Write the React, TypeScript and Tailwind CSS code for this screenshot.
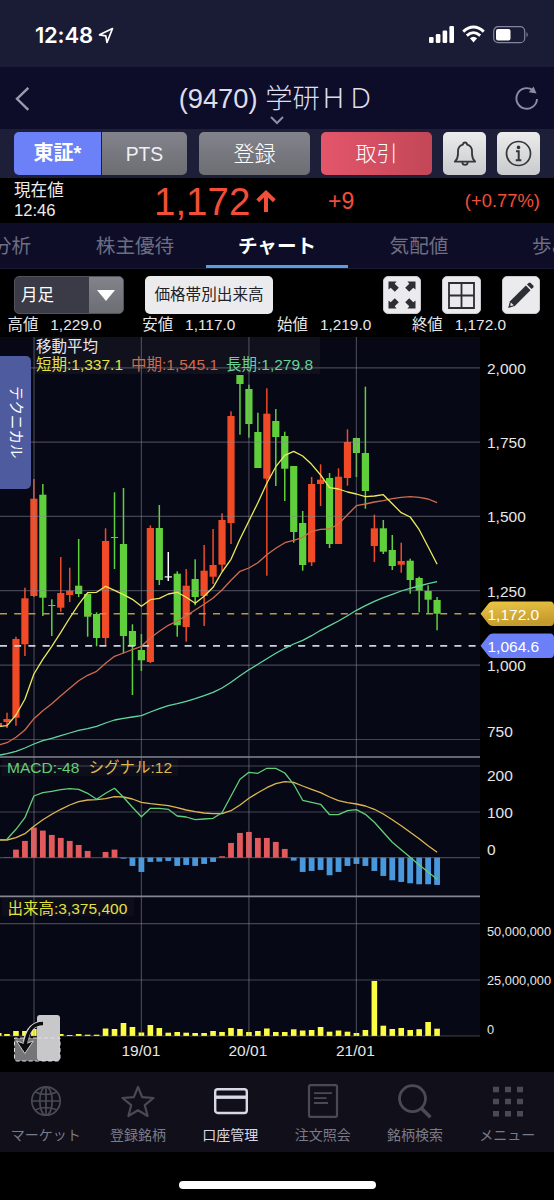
import { clsx } from "clsx";
import type { ReactNode } from "react";

type Candle = [kind: "up" | "down" | "flat", high: number, top: number, bottom: number, low: number];

const candleColor = { up: "#f04a26", down: "#5fd03c", flat: "#ffffff" };

const candles: Candle[] = [
  ["up", 712.7, 719, 722, 728],
  ["up", 636.7, 639, 717.7, 725.7],
  ["up", 587.7, 598.3, 644.3, 656],
  ["up", 479, 498.7, 596, 597],
  ["down", 484, 494.7, 597.7, 616],
  ["down", 599.3, 605, 606, 636],
  ["up", 557, 593, 607.7, 611.7],
  ["up", 567.7, 590.7, 595, 602],
  ["down", 539, 585.7, 594, 597],
  ["down", 593.3, 594, 616.7, 636.7],
  ["down", 612.3, 614, 638, 646.3],
  ["up", 528.3, 541, 638, 646],
  ["down", 492.3, 537, 538, 569],
  ["down", 488, 544, 636, 653.3],
  ["down", 624.3, 631, 646, 695],
  ["down", 634, 650, 660.3, 671],
  ["up", 525.3, 528, 662, 663],
  ["down", 505, 528, 580, 585],
  ["flat", 552, 576.3, 577.5, 581],
  ["down", 571.3, 573.7, 625.3, 636.7],
  ["up", 569, 585.7, 627, 641.7],
  ["down", 559.3, 579, 597, 605.3],
  ["up", 545, 570.7, 596, 626],
  ["up", 529, 565, 576.7, 584],
  ["up", 513.3, 520, 564.7, 571],
  ["up", 411.3, 416, 523, 544],
  ["down", 375, 375, 384, 434.7],
  ["down", 384.7, 389, 424, 437.7],
  ["down", 412.7, 432, 468, 468],
  ["up", 388.3, 413.7, 478.7, 575.7],
  ["down", 409, 421, 437, 486],
  ["down", 431.7, 436, 468.7, 501],
  ["down", 466, 466, 532, 542.7],
  ["down", 511, 523, 565, 570.7],
  ["up", 477, 484, 562.3, 566],
  ["up", 464.3, 479.7, 484, 506],
  ["down", 473, 478, 544, 548],
  ["up", 468.3, 476.7, 544, 544],
  ["up", 429.3, 442, 478, 485.7],
  ["down", 437.7, 438, 453, 477],
  ["down", 386.7, 453, 491, 508.7],
  ["up", 514.7, 528.3, 546, 562],
  ["down", 520, 528.3, 551.7, 554],
  ["down", 535, 550, 566, 570],
  ["up", 542.7, 561, 564.7, 572.7],
  ["down", 558.7, 560.7, 580, 593.7],
  ["down", 576.7, 578, 590.7, 612.3],
  ["down", 585.3, 591, 599.7, 614],
  ["down", 597, 600, 613.7, 630.3]
];

// Series are stored in thirds of a pixel below the top of their pane, first value is the left edge
const shortMa = [1069, 1067, 1035, 988, 912, 868, 829, 787, 744, 703, 668, 667, 649, 661, 674, 688, 709, 689, 685, 672, 667, 682, 700, 679, 652, 606, 568, 507, 453, 398, 340, 290, 256, 244, 258, 283, 315, 353, 357, 366, 372, 380, 378, 374, 401, 428, 441, 479, 530, 583];
const middleMa = [1124, 1118, 1102, 1080, 1046, 1022, 1001, 977, 955, 932, 916, 904, 880, 859, 849, 839, 829, 804, 784, 766, 753, 737, 720, 703, 684, 660, 631, 604, 594, 578, 554, 535, 518, 511, 502, 484, 478, 477, 462, 434, 407, 402, 396, 392, 386, 382, 380, 382, 387, 398];
const longMa = [1155, 1151, 1144, 1134, 1122, 1112, 1105, 1097, 1089, 1081, 1076, 1069, 1059, 1050, 1045, 1041, 1037, 1026, 1016, 1007, 1001, 994, 986, 977, 967, 954, 937, 917, 899, 883, 866, 850, 835, 822, 811, 797, 781, 767, 753, 737, 721, 707, 694, 683, 673, 663, 655, 648, 641, 635];
const macd = [269, 268, 238, 203, 138, 128, 124, 119, 116, 118, 130, 148, 130, 115, 142, 172, 200, 175, 175, 178, 198, 201, 209, 207, 205, 188, 138, 88, 67, 70, 55, 55, 69, 103, 151, 157, 163, 194, 194, 182, 179, 193, 217, 247, 277, 299, 322, 345, 366, 388];
const signal = [270, 270, 263, 251, 229, 209, 193, 178, 165, 155, 150, 149, 146, 140, 141, 147, 157, 161, 164, 167, 173, 180, 185, 189, 191, 191, 182, 165, 145, 128, 113, 101, 95, 97, 108, 118, 128, 141, 152, 158, 162, 168, 178, 192, 209, 227, 247, 266, 287, 307];
const histogram = [1, 24, 50, 90, 81, 68, 59, 50, 38, 20, 0, 17, 24, -3, -25, -43, -13, -12, -10, -25, -22, -25, -19, -13, 4, 44, 74, 77, 59, 59, 47, 26, -9, -43, -40, -37, -53, -43, -25, -19, -25, -40, -55, -68, -73, -77, -80, -80, -82];
const volumes = [2, 5, 5, 7, 2, 2, 2, 1, 2, 1.3, 1.3, 7.5, 7, 13, 9, 3.5, 11, 8, 3.3, 4, 3.3, 3, 3, 5, 4, 8, 7, 4, 5, 7.5, 4, 4, 6.7, 5.5, 6, 9, 4.3, 5.5, 4.3, 3, 6, 55, 10.3, 7, 8, 6, 6.8, 14, 7.3];

const xAt = (i: number) => 7 + i * 8.96;

function linePoints(values: number[], paneTop: number) {
  return values.map((v, i) => `${i === 0 ? 0 : xAt(i - 1).toFixed(1)},${(paneTop + v / 3).toFixed(1)}`).join(" ");
}

const gridX = [34, 141.4, 248.9, 356.4];
const gridY = [367.8, 442.1, 516.4, 590.7, 665.2, 739.5, 766, 812, 857.6, 923.7, 980, 1036];

const axisLabels: [string, number][] = [
  ["2,000", 374],
  ["1,750", 448],
  ["1,500", 522.3],
  ["1,250", 597],
  ["1,000", 671],
  ["750", 737],
  ["200", 781],
  ["100", 818],
  ["0", 855]
];

const volumeLabels: [string, number][] = [
  ["50,000,000", 936],
  ["25,000,000", 985],
  ["0", 1034]
];

function PriceChart() {
  return (
    <svg width="554" height="735" viewBox="0 337 554 735" className="block" fill="none">
      <rect x="0" y="337" width="480" height="699" fill="#070815" />
      <rect x="34" y="337" width="286" height="37" fill="#10111d" />
      <rect x="2" y="759" width="176" height="17" fill="#0d0e1a" />
      <rect x="2" y="898" width="132" height="18" fill="#0d0e1a" />

      <rect x="0" y="723" width="2" height="3" fill="#f04a26" />
      {candles.map(([kind, high, top, bottom, low], i) => (
        <g key={i} fill={candleColor[kind]}>
          <rect x={xAt(i) - 0.75} y={high} width="1.5" height={low - high} />
          <rect x={xAt(i) - 3.6} y={top} width="7.2" height={bottom - top} />
        </g>
      ))}
      {histogram.map((v, i) => (
        <rect key={i} x={xAt(i) - 2.9} y={v > 0 ? 857.6 - v / 3 : 857.6} width="5.8" height={Math.abs(v) / 3} fill={v > 0 ? "#e25a5c" : "#4a98dc"} />
      ))}
      <rect x="0" y="1033" width="1.5" height="3" fill="#fdfc44" />
      {volumes.map((h, i) => (
        <rect key={i} x={xAt(i) - 2.8} y={1036 - h} width="5.6" height={h} fill="#fdfc44" />
      ))}

      <g stroke="#8c8c98" strokeOpacity="0.46" strokeWidth="1.2">
        {gridX.map((x) => (
          <line key={x} x1={x} x2={x} y1="337" y2="1036" />
        ))}
        {gridY.map((y) => (
          <line key={y} x1="0" x2="480" y1={y} y2={y} />
        ))}
      </g>
      <path d="M0 757H480M0 896.4H480" stroke="#85858f" strokeWidth="1.7" />

      <path d="M0 613.8H480" stroke="#b99a42" strokeWidth="1.5" strokeDasharray="7 7.2" />
      <path d="M0 645.9H480" stroke="#ced2de" strokeWidth="1.7" strokeDasharray="7 7.2" />

      <g strokeWidth="1.3" strokeLinejoin="round">
        <polyline points={linePoints(longMa, 370)} stroke="#62d69e" />
        <polyline points={linePoints(middleMa, 370)} stroke="#cd6c50" />
        <polyline points={linePoints(shortMa, 370)} stroke="#eaea5c" />
        <polyline points={linePoints(signal, 750)} stroke="#dfb750" />
        <polyline points={linePoints(macd, 750)} stroke="#62cf78" />
      </g>

      <g className="font-['Liberation_Sans','Noto_Sans_CJK_JP',sans-serif] text-[15.5px]" fill="#e6e6e8">
        <text x="36" y="351.5">移動平均</text>
        <text x="36" y="370" fill="#e4e23f">短期:1,337.1</text>
        <text x="131" y="370" fill="#d06a4c">中期:1,545.1</text>
        <text x="226" y="370" fill="#65d49b">長期:1,279.8</text>
        <text x="7" y="773" fill="#62cf78">MACD:-48</text>
        <text x="88.5" y="773" fill="#dfb750">シグナル:12</text>
        <text x="7.5" y="913.5" fill="#e4e23f">出来高:3,375,400</text>
        {axisLabels.map(([label, y]) => (
          <text key={label} x="487" y={y}>{label}</text>
        ))}
        <text x="121.5" y="1056">19/01</text>
        <text x="228.5" y="1056">20/01</text>
        <text x="336" y="1056">21/01</text>
      </g>
      <g className="font-['Liberation_Sans',sans-serif] text-[12.8px]" fill="#e6e6e8">
        {volumeLabels.map(([label, y]) => (
          <text key={label} x="487" y={y}>{label}</text>
        ))}
      </g>

      <defs>
        <linearGradient id="goldTag" x1="0" x2="0.3" y1="0" y2="1">
          <stop stopColor="#ecc847" />
          <stop offset="1" stopColor="#c59a2d" />
        </linearGradient>
      </defs>
      <path d="M480.5 613.8L488.5 603.5Q490 601.4 493 601.4H550Q554 601.4 554 606V621.5Q554 626 550 626H493Q490 626 488.5 624Z" fill="url(#goldTag)" />
      <path d="M480.5 645.8L488.5 635.5Q490 633.4 493 633.4H550Q554 633.4 554 638V653.5Q554 658 550 658H493Q490 658 488.5 656Z" fill="#6b80f6" />
      <g className="font-['Liberation_Sans',sans-serif] text-[15.5px]" fill="#fff">
        <text x="487.5" y="620">1,172.0</text>
        <text x="487.5" y="652">1,064.6</text>
      </g>
    </svg>
  );
}

function FoldButton() {
  return (
    <svg width="48" height="48" viewBox="0 0 48 48" fill="none" className="absolute left-[13px] top-[677px]">
      <path d="M1.5 24H24V47H4Q1.5 47 1.5 44Z" fill="#757578" />
      <rect x="24" y="1" width="23" height="46" rx="3" fill="#c8c8cb" />
      <path d="M24 24H1.5V44Q1.5 47 4 47H44Q47 47 47 44V24H24" stroke="#dedee2" strokeDasharray="4 2.5" strokeWidth="1" />
      <path d="M30 9.5C20 9.5 14.5 16 12.3 28" stroke="#d8d8da" strokeWidth="5" />
      <path d="M3.5 27L10 29.2H14L20.3 27L11.8 39.5Z" fill="#0c0c0e" stroke="#d8d8da" strokeWidth="0.9" />
      <path d="M30 9.5C20 9.5 14.5 16 12 32" stroke="#0c0c0e" strokeWidth="3.4" />
    </svg>
  );
}

function StatusBar() {
  return (
    <div className="flex h-[67px] items-start bg-[#1a1b35] pl-[35px] pr-[25px] pt-[22px] text-white">
      <span className="font-['Inter',sans-serif] text-[22px] font-semibold leading-[27px] tracking-[-0.2px]">12:48</span>
      <svg width="16" height="17" viewBox="0 0 16 17" fill="none" className="ml-[5px] mt-[5px]">
        <path d="M14.5 1.5L1.5 7.8L7.8 8.8L9 15.5Z" stroke="currentColor" strokeWidth="1.7" strokeLinejoin="round" />
      </svg>
      <svg width="25" height="17" viewBox="0 0 25 17" fill="currentColor" className="ml-auto mt-1">
        <rect y="11" width="4.6" height="6" rx="1.2" />
        <rect x="6.8" y="8" width="4.6" height="9" rx="1.2" />
        <rect x="13.6" y="4.5" width="4.6" height="12.5" rx="1.2" />
        <rect x="20.4" y="0" width="4.6" height="17" rx="1.2" />
      </svg>
      <svg width="23" height="18" viewBox="0 0 23 18" fill="none" stroke="currentColor" className="ml-2 mt-[3px]">
        <path d="M1.2 6.6Q11.5 -2.6 21.8 6.6" strokeWidth="3" />
        <path d="M4.8 10.6Q11.5 4.6 18.2 10.6" strokeWidth="2.8" />
        <path d="M7.9 13.3Q11.5 10.3 15.1 13.3L11.5 17.4Z" fill="currentColor" stroke="none" />
      </svg>
      <svg width="36" height="18" viewBox="0 0 36 18" fill="none" className="ml-2 mt-[4px]">
        <rect x="0.7" y="0.7" width="31" height="16" rx="4.5" stroke="#84859a" strokeWidth="1.2" />
        <rect x="3" y="3" width="14.5" height="11.5" rx="2" fill="#fff" />
        <path d="M33.5 6Q36 8.5 33.5 11.5Z" fill="#84859a" />
      </svg>
    </div>
  );
}

function TitleBar() {
  return (
    <header className="flex h-[62px] items-start justify-between bg-[#0d0d2a] px-[15px]">
      <svg width="15" height="26" viewBox="0 0 15 26" fill="none" className="mt-[19px]">
        <path d="M13.3 1.8L2 12.8L13.3 23.8" stroke="#9a9aae" strokeWidth="2.4" />
      </svg>
      <div className="ml-[8px] flex flex-col items-center pt-3">
        <h1 className="whitespace-pre text-[27.3px] font-light leading-10 text-[#dddded]">(9470) 学研ＨＤ</h1>
        <svg width="14" height="9" viewBox="0 0 14 9" fill="none" className="mt-[-3px]">
          <path d="M1 1L7 7L13 1" stroke="#8e8ea4" strokeWidth="2" />
        </svg>
      </div>
      <svg width="24" height="25" viewBox="0 0 24 25" fill="none" className="mt-[19px]">
        <path d="M18 4.3A10.3 10.3 0 1 0 22 13" stroke="#8c8ca0" strokeWidth="1.9" />
        <path d="M18.6 0.5L21.5 7.6L13.8 6.2Z" fill="#8c8ca0" />
      </svg>
    </header>
  );
}

const grayButton = "bg-linear-to-b from-[#82838b] to-[#6d6e74]";

function ActionRow() {
  return (
    <div className="flex h-[49px] items-start bg-[#1d1e38] px-[14px] pt-[3px] text-[21px] text-white">
      <button className="h-[43px] w-[87px] rounded-l-[5px] bg-[#6c80f8] pb-[2px] text-[20px] font-bold">東証*</button>
      <button className={clsx("ml-px h-[43px] w-[85px] rounded-r-[5px] text-[#f0f0f4]", grayButton)}>
        <span className="inline-block scale-x-[0.92]">PTS</span>
      </button>
      <button className={clsx("ml-3 h-[43px] w-[111px] rounded-[5px] font-light", grayButton)}>登録</button>
      <button className="ml-[11px] h-[43px] w-[111px] rounded-[5px] bg-linear-to-r from-[#e4566a] to-[#c24757] font-light">取引</button>
      <button className="ml-[11px] flex h-[43px] w-[43px] items-center justify-center rounded-[5px] bg-linear-to-b from-[#ececec] to-[#c9cacd]">
        <svg width="24" height="26" viewBox="0 0 26 28" fill="none" stroke="#35363a" strokeWidth="2" strokeLinejoin="round">
          <path d="M2 22.3Q5.4 19 5.4 14V11.5Q5.4 5 10.7 3.8Q11 1.5 13 1.5Q15 1.5 15.3 3.8Q20.6 5 20.6 11.5V14Q20.6 19 24 22.3Z" />
          <path d="M10 22.8Q10.3 25.7 13 25.7Q15.7 25.7 16 22.8" />
        </svg>
      </button>
      <button className="ml-[11px] flex h-[43px] w-[43px] items-center justify-center rounded-[5px] bg-linear-to-b from-[#ececec] to-[#c9cacd]">
        <svg width="27" height="27" viewBox="0 0 27 27" fill="none" stroke="#35363a">
          <circle cx="13.5" cy="13.5" r="12" strokeWidth="1.7" />
          <circle cx="13.5" cy="7.4" r="1.8" fill="#35363a" stroke="none" />
          <path d="M11 11.3H13.7V20M10.8 20.3H16.3" strokeWidth="2" />
        </svg>
      </button>
    </div>
  );
}

function PriceRow() {
  return (
    <div className="flex h-[45px] bg-black text-[#f24e38]">
      <div className="w-[140px] pl-[14px] pt-[3px] text-[16.6px] leading-[20px] text-[#ececee]">
        <p>現在値</p>
        <p>12:46</p>
      </div>
      <div className="flex w-[188px] pl-[14px]">
        <span className="text-[38.5px] leading-[47px]">1,172</span>
        <svg width="20" height="22" viewBox="0 0 20 22" fill="none" stroke="currentColor" strokeWidth="4" className="ml-[6px] mt-3">
          <path d="M10 22V3" />
          <path d="M1.7 10.8L10 2.8L18.3 10.8" />
        </svg>
      </div>
      <span className="text-[23px] leading-[47px]">+9</span>
      <span className="ml-auto pr-[14px] text-[18.4px] leading-[46px]">(+0.77%)</span>
    </div>
  );
}

const tabs = [
  { label: "分析", className: "w-[64px] justify-start indent-[-8px]" },
  { label: "株主優待", className: "w-[142px] justify-center" },
  { label: "チャート", className: "w-[142px] justify-center", active: true },
  { label: "気配値", className: "w-[142px] justify-center" },
  { label: "歩み値", className: "w-[142px] pl-[42px] justify-start" }
];

function TabBar() {
  return (
    <nav className="flex h-[46px] overflow-hidden border-b border-[#191a30] bg-[#0d0d28] text-[19.6px] text-[#6e6e82]">
      {tabs.map((tab) => (
        <div key={tab.label} className={clsx("relative flex shrink-0 whitespace-nowrap leading-[46px]", tab.className, tab.active && "font-bold text-white")}>
          {tab.label}
          {tab.active ? <span className="absolute inset-x-0 bottom-0 h-[3px] bg-[#599fdb]" /> : null}
        </div>
      ))}
    </nav>
  );
}

function ToolButton({ children }: { children: ReactNode }) {
  return <button className="flex h-[38px] w-[38.5px] items-center justify-center rounded-[5px] border border-[#c9c9cf] bg-[#ebebed]">{children}</button>;
}

const ohlc = [
  ["高値", "1,229.0"],
  ["安値", "1,117.0"],
  ["始値", "1,219.0"],
  ["終値", "1,172.0"]
];

function ChartToolbar() {
  return (
    <div className="h-[68px] bg-black pt-[7px]">
      <div className="flex h-[38px] px-[14px]">
        <div className="flex w-[110px] overflow-hidden rounded-[5px] border border-[#52535f] bg-[#3a3b47] text-[16.5px] leading-[36px] text-white">
          <span className="flex-1 pl-[6px]">月足</span>
          <span className={clsx("flex w-[34px] items-center justify-center", grayButton)}>
            <svg width="18" height="11" viewBox="0 0 18 11" fill="#fff">
              <path d="M0 0H18L9 11Z" />
            </svg>
          </span>
        </div>
        <button className="ml-[21px] w-[128px] rounded-[5px] bg-[#ebebed] text-[15.6px] text-[#222226]">価格帯別出来高</button>
        <div className="ml-auto flex gap-[21px]">
          <ToolButton>
            <svg width="28" height="28" viewBox="0 0 28 28" fill="#2d2e33">
              {[0, 90, 180, 270].map((angle) => (
                <path key={angle} transform={`rotate(${angle} 14 14)`} d="M0.5 0.5H8.6L6.7 2.7L10.8 6.8L6.8 10.8L2.7 6.7L0.5 8.6Z" />
              ))}
            </svg>
          </ToolButton>
          <ToolButton>
            <svg width="27" height="27" viewBox="0 0 27 27" fill="none" stroke="#2d2e33" strokeWidth="1.8">
              <path d="M1 1H26V26H1ZM13.5 1V26M1 13.5H26" />
            </svg>
          </ToolButton>
          <ToolButton>
            <svg width="28" height="28" viewBox="0 0 28 28" fill="#2d2e33">
              <path d="M1.2 27L3 20.3L18.9 4.6L23.5 9.2L7.8 25Z" />
              <path d="M20 3.4L21.6 1.9Q22.6 1 23.7 1.9L26.2 4.4Q27.1 5.5 26.2 6.6L24.6 8.1Z" />
              <path d="M3.8 21.4L6.8 24.3L3.3 25Z" fill="#ebebed" />
            </svg>
          </ToolButton>
        </div>
      </div>
      <div className="flex pl-[7.5px] text-[15.4px] leading-[22px] text-[#e6e6e8]">
        {ohlc.map(([label, value]) => (
          <div key={label} className="flex w-[134.8px] shrink-0 gap-[12px]">
            <span>{label}</span>
            <span>{value}</span>
          </div>
        ))}
      </div>
    </div>
  );
}

const navItems = [
  {
    label: "マーケット",
    icon: (
      <g strokeWidth="1.7">
        <circle cx="18" cy="18" r="14.2" />
        <ellipse cx="18" cy="18" rx="6.2" ry="14.2" />
        <path d="M18 4V32M4 18H32M7 9Q18 14 29 9M7 27Q18 22 29 27" />
      </g>
    )
  },
  {
    label: "登録銘柄",
    icon: <path d="M18 4L22.2 14.1L33.5 15L24.8 22.2L27.6 33L18 27.2L8.4 33L11.2 22.2L2.5 15L13.8 14.1Z" strokeWidth="2.2" strokeLinejoin="round" />
  },
  {
    label: "口座管理",
    active: true,
    icon: (
      <g>
        <rect x="2.2" y="6.2" width="31.6" height="23.8" rx="2.5" strokeWidth="2.4" />
        <path d="M2 14.2H34" strokeWidth="3.4" />
      </g>
    )
  },
  {
    label: "注文照会",
    icon: (
      <g strokeWidth="2.2">
        <rect x="4" y="2.2" width="28" height="31.6" rx="1.5" />
        <path d="M9 10.2H27M9 15.2H21.5M9 20H23" strokeWidth="1.8" />
      </g>
    )
  },
  {
    label: "銘柄検索",
    icon: (
      <g>
        <circle cx="15.5" cy="15.6" r="13" strokeWidth="2.8" />
        <path d="M24.6 25.5L33.4 34.3" strokeWidth="3.6" />
      </g>
    )
  },
  {
    label: "メニュー",
    icon: (
      <path d="M3 6.5H9M15 6.5H21M27 6.5H33M3 18.5H9M15 18.5H21M27 18.5H33M3 30.8H9M15 30.8H21M27 30.8H33" strokeWidth="5.6" />
    )
  }
];

function BottomNav() {
  return (
    <nav className="grid h-[80px] grid-cols-6 bg-[#100f1a] pt-[11px]">
      {navItems.map((item) => (
        <div key={item.label} className={clsx("flex flex-col items-center text-[14px]", item.active ? "text-[#d8d8e6]" : "text-[#7a7a88]")}>
          <svg width="36" height="36" viewBox="0 0 36 36" fill="none" stroke={item.active ? "#d8d8e6" : "#4a4a56"}>
            {item.icon}
          </svg>
          <span className="-ml-px mt-[5px] whitespace-nowrap leading-[22px]">{item.label}</span>
        </div>
      ))}
    </nav>
  );
}

export default function App() {
  return (
    <div className="h-[1200px] w-[554px] overflow-hidden bg-black font-['Liberation_Sans','Noto_Sans_CJK_JP',sans-serif]">
      <StatusBar />
      <TitleBar />
      <ActionRow />
      <PriceRow />
      <TabBar />
      <ChartToolbar />
      <div className="relative h-[735px]">
        <PriceChart />
        <div className="absolute left-0 top-[19px] flex h-[133px] w-[31px] items-center justify-center rounded-r-[5px] bg-[#4e5b9e] text-[14.5px] leading-[31px] text-white [text-orientation:sideways] [writing-mode:vertical-rl]">
          テクニカル
        </div>
        <FoldButton />
      </div>
      <BottomNav />
      <div className="flex h-12 justify-center pt-[29px]">
        <div className="h-2 w-[197px] rounded-full bg-white" />
      </div>
    </div>
  );
}
